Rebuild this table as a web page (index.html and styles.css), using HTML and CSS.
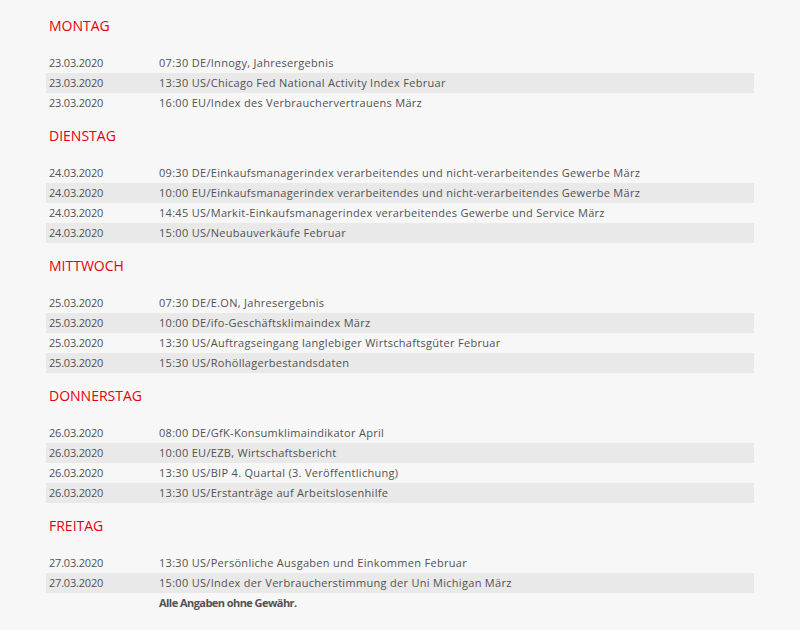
FILE: index.html
```html
<!DOCTYPE html>
<html lang="de">
<head>
<meta charset="utf-8">
<link rel="stylesheet" href="styles.css">
</head>
<body>
<div class="calendar">
  <section class="day">
    <h2 class="day-title">MONTAG</h2>
    <div class="row"><span class="date">23.03.2020</span><span class="event">07:30 DE/Innogy, Jahresergebnis</span></div>
    <div class="row alt"><span class="date">23.03.2020</span><span class="event">13:30 US/Chicago Fed National Activity Index Februar</span></div>
    <div class="row"><span class="date">23.03.2020</span><span class="event">16:00 EU/Index des Verbrauchervertrauens März</span></div>
  </section>
  <section class="day">
    <h2 class="day-title">DIENSTAG</h2>
    <div class="row"><span class="date">24.03.2020</span><span class="event">09:30 DE/Einkaufsmanagerindex verarbeitendes und nicht-verarbeitendes Gewerbe März</span></div>
    <div class="row alt"><span class="date">24.03.2020</span><span class="event">10:00 EU/Einkaufsmanagerindex verarbeitendes und nicht-verarbeitendes Gewerbe März</span></div>
    <div class="row"><span class="date">24.03.2020</span><span class="event">14:45 US/Markit-Einkaufsmanagerindex verarbeitendes Gewerbe und Service März</span></div>
    <div class="row alt"><span class="date">24.03.2020</span><span class="event">15:00 US/Neubauverkäufe Februar</span></div>
  </section>
  <section class="day">
    <h2 class="day-title">MITTWOCH</h2>
    <div class="row"><span class="date">25.03.2020</span><span class="event">07:30 DE/E.ON, Jahresergebnis</span></div>
    <div class="row alt"><span class="date">25.03.2020</span><span class="event">10:00 DE/ifo-Geschäftsklimaindex März</span></div>
    <div class="row"><span class="date">25.03.2020</span><span class="event">13:30 US/Auftragseingang langlebiger Wirtschaftsgüter Februar</span></div>
    <div class="row alt"><span class="date">25.03.2020</span><span class="event">15:30 US/Rohöllagerbestandsdaten</span></div>
  </section>
  <section class="day">
    <h2 class="day-title">DONNERSTAG</h2>
    <div class="row"><span class="date">26.03.2020</span><span class="event">08:00 DE/GfK-Konsumklimaindikator April</span></div>
    <div class="row alt"><span class="date">26.03.2020</span><span class="event">10:00 EU/EZB, Wirtschaftsbericht</span></div>
    <div class="row"><span class="date">26.03.2020</span><span class="event">13:30 US/BIP 4. Quartal (3. Veröffentlichung)</span></div>
    <div class="row alt"><span class="date">26.03.2020</span><span class="event">13:30 US/Erstanträge auf Arbeitslosenhilfe</span></div>
  </section>
  <section class="day">
    <h2 class="day-title">FREITAG</h2>
    <div class="row"><span class="date">27.03.2020</span><span class="event">13:30 US/Persönliche Ausgaben und Einkommen Februar</span></div>
    <div class="row alt"><span class="date">27.03.2020</span><span class="event">15:00 US/Index der Verbraucherstimmung der Uni Michigan März</span></div>
    <div class="row"><span class="date"></span><span class="event note">Alle Angaben ohne Gewähr.</span></div>
  </section>
</div>
</body>
</html>
```
FILE: styles.css
```css
html, body {
  margin: 0;
  padding: 0;
  background: #f7f7f7;
}
body {
  font-family: "Open Sans", "Noto Sans", sans-serif;
  color: #525252;
}
.calendar {
  width: 708px;
  margin-left: 46px;
  padding-top: 15px;
}
.day {
  margin-bottom: 12px;
}
.day-title {
  margin: 0 0 16px 3px;
  font-size: 14px;
  font-weight: normal;
  line-height: 22px;
  color: #e3000f;
}
.row {
  display: flex;
  height: 20px;
  line-height: 20px;
  font-size: 11px;
  padding-left: 3px;
}
.row.alt {
  background: #e9e9e9;
}
.date {
  width: 110px;
  flex: none;
  letter-spacing: -0.2px;
}
.event {
  letter-spacing: 0.3px;
}
.event.note {
  font-weight: bold;
  letter-spacing: -0.55px;
}
```
